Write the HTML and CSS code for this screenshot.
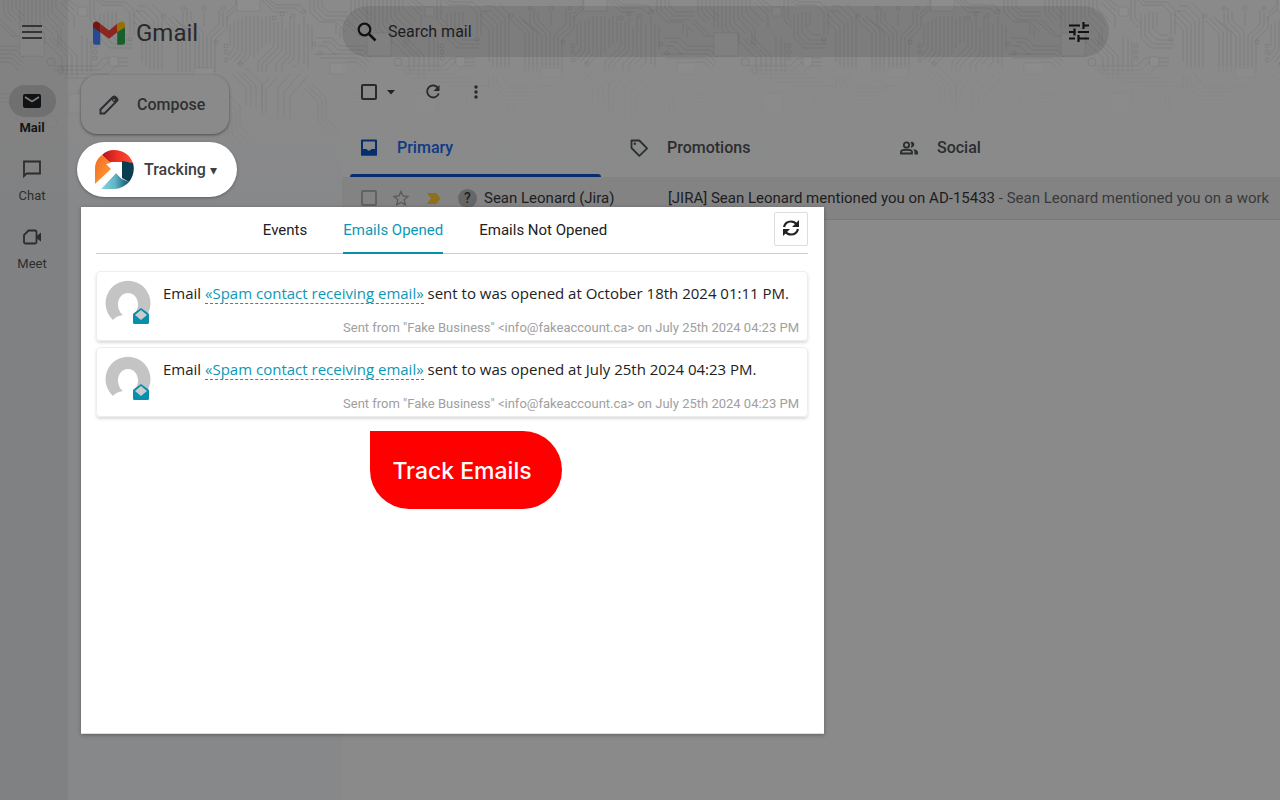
FILE: index.html
```html
<!DOCTYPE html>
<html lang="en">
<head>
<meta charset="utf-8">
<meta name="viewport" content="width=device-width, initial-scale=1">
<title>Gmail</title>
<link rel="stylesheet" href="styles.css">
</head>
<body>
<svg class="circuit" width="100%" height="170" aria-hidden="true">
  <defs>
    <pattern id="board" width="347" height="170" patternUnits="userSpaceOnUse">
      <g fill="none" stroke="#000" stroke-opacity=".075">
        <path d="M97 0l5 5h20l8 8v22M101 0l3 2h22l8 8v25M142 62V30l-9-9M146 66V27l-13-13M150 70V24l-14-14M154 70V21l-10-10h-8M158 70V18l-12-12h-8M162 70V14l-10-10"/>
        <path d="M164 20l14 14v38M168 18l14 14v40M172 16l14 14v42M176 20l14 12v40M183 12v12l12 12v36M187 8v14l12 12v38M191 12v8l12 12v40M207 72V36l12-12V10M211 72V38l12-12V12M215 72V40l12-12V16M204 12v14"/>
        <path d="M240 0v6l-14 12M236 0v5l-10 9M274 22v24l-16 16v10M278 22v26l-16 16v8M282 18v32l-16 16v6M286 28v26l-10 10v8M290 16v40l-8 8v8M294 20v38l-6 6M299 24v38l-6 6M304 16v48"/>
        <path d="M262 0l12 12h14M266 0l9 8h20l7 6M270 0l6 5h24l6 7M310 0v12l10 10h16l11 11M314 0v10l10 10h18l5 5M318 0v8l9 8h20M322 0v6l7 6h18M0 24l12 12h8M0 20l15 14M28 0v30l8 8M32 0v28l8 8M36 0v25l9 9v10M40 0v22l12 12M44 0v18l14 15v12M48 0v16l13 13v16M52 0v12l13 14M56 0v8l14 14"/>
        <path d="M0 46h18l8 8M0 50h16l8 8M0 54h14l8 8M0 58h12l8 8M46 42l16 16v14M49 38l18 18v18M53 38l19 18v20M58 36l19 20v22M82 36v36M87 38v34M91 42v30M316 38h16l8 8h7M322 42h8l8 8h9M318 46h8l8 8h13M314 54h22M319 58h28"/>
        <path d="M54 66h42l8-8h24M54 70h46l8-8h20M58 74h50l8-8h12M64 78h58M82 82h48M100 86h42M232 74l14 14v18M237 72l14 14v20M242 72l14 14v22M246 68l16 16v28M270 78l-8 8v30M276 78l-10 12v24M290 74l-12 14v30M300 74l-16 18v26M308 76l-18 20v24"/>
        <path d="M142 76v12l12 12h28M146 76v10l12 10h26M150 76v8l10 8h28M154 74l10 14h30M182 76l8 10h16M226 92l14 14v20l14 14M222 96l14 14v20l14 14M218 100l14 14v20l14 14M214 104l14 14v20l14 14"/>
        <path d="M0 94h14l12 12M0 98h12l12 12M0 102h10l12 12M78 90v16l16 16v18M82 90v14l16 16v20M86 90v12l16 16v22M90 90v10l16 16v24M120 94v12l-10 12v22M124 94v14l-10 12v20M128 94v16l-10 12v18M162 104v14l16 16h20M166 104v12l15 14h20M304 88l14 14v20l14 14M308 86l14 14v20l14 14M312 84l14 14v20l14 14"/>
        <path d="M100 14v24l10 10h22M104 14v22l9 8h20M108 12v20l8 8h16M112 12v16l7 7h8M116 12v14M230 24v22M234 22v26l-6 8M238 20v30l-8 10M242 18v34l-8 10M246 16v38l-8 10M250 16v40l-8 8M254 16v42M258 16v38M262 18v30M266 16v28M270 16v26M308 24v44M312 26v24M60 2l14 14v12M64 0l11 11M68 0l9 6M90 0v20l8 8M94 0v18l5 5M4 0v14l8 8M8 0v12l8 8M12 0v10l10 10M16 0v8l8 8M20 0v30M24 0v28M336 24v10M340 28v10M0 62h10l9 9"/>
        <circle cx="130" cy="39" r="2"/><circle cx="164" cy="16" r="2"/><circle cx="183" cy="8" r="2"/><circle cx="204" cy="8" r="2"/><circle cx="216" cy="42" r="2"/><circle cx="223" cy="8" r="2"/><circle cx="274" cy="18" r="2"/><circle cx="282" cy="14" r="2"/><circle cx="293" cy="16" r="2"/><circle cx="304" cy="12" r="2"/><circle cx="314" cy="44" r="2"/><circle cx="320" cy="53" r="2"/><circle cx="51" cy="62" r="4"/><circle cx="61" cy="70" r="3"/><circle cx="95" cy="46" r="2"/><circle cx="95" cy="52" r="2"/><circle cx="95" cy="58" r="2"/><circle cx="226" cy="46" r="2"/><circle cx="226" cy="52" r="2"/><circle cx="226" cy="60" r="2"/><circle cx="22" cy="117" r="5"/><circle cx="51" cy="122" r="6"/><circle cx="240" cy="64" r="2"/>
      </g>
      <g fill="#8d8d8d" stroke="#000" stroke-opacity=".06">
        <rect x="78" y="7" width="9" height="9" rx="1"/><rect x="237" y="-2" width="23" height="13"/><rect x="20" y="33" width="24" height="23"/><rect x="109" y="57" width="9" height="9" rx="1"/><rect x="194" y="68" width="20" height="9"/><rect x="330" y="63" width="18" height="11"/><rect x="69" y="94" width="20" height="19"/>
      </g>
    </pattern>
    <linearGradient id="fade" x1="0" y1="0" x2="0" y2="1">
      <stop offset="0" stop-color="#fff"/><stop offset=".4" stop-color="#fff"/><stop offset="1" stop-color="#fff" stop-opacity="0"/>
    </linearGradient>
    <mask id="fade-mask"><rect width="100%" height="170" fill="url(#fade)"/></mask>
  </defs>
  <rect width="100%" height="170" fill="url(#board)" mask="url(#fade-mask)"/>
</svg>

<div class="app">
  <nav class="rail" aria-label="Apps">
    <button class="menu" aria-label="Main menu"><svg width="20" height="14" viewBox="0 0 20 14"><path d="M0 1h20M0 7h20M0 13h20" stroke="#333438" stroke-width="2"/></svg></button>
    <a class="rail-item active" href="#mail"><span class="rail-icon"><svg width="18" height="14" viewBox="0 0 18 14"><rect width="18" height="14" rx="2" fill="#111214"/><path d="M2 3l7 4.500 7-4.500" fill="none" stroke="#7e7f80" stroke-width="1.800"/></svg></span>Mail</a>
    <a class="rail-item" href="#chat"><span class="rail-icon"><svg width="18" height="18" viewBox="0 0 18 18"><path d="M1 16V1.500h16v12H3.500z" fill="none" stroke="#2c2d2f" stroke-width="1.800"/></svg></span>Chat</a>
    <a class="rail-item" href="#meet"><span class="rail-icon"><svg width="18" height="16" viewBox="0 0 18 16"><path d="M5.500 1.500H12a1.500 1.500 0 0 1 1.500 1.500v10a1.500 1.500 0 0 1-1.500 1.500H2.500A1.500 1.500 0 0 1 1 13V6z" fill="none" stroke="#2c2d2f" stroke-width="1.800"/><path d="M13 7.500L18 3.500v9L13 9z" fill="#2c2d2f"/></svg></span>Meet</a>
  </nav>

  <aside class="side">
    <a class="brand" href="#inbox">
      <svg width="32" height="24" viewBox="0 0 33 24" aria-hidden="true"><path d="M0 4l7.500 5v15H2.200A2.200 2.200 0 0 1 0 21.800z" fill="#254992"/><path d="M25 9l8-5v17.800a2.200 2.200 0 0 1-2.200 2.200H25z" fill="#195f2e"/><path d="M7.500 2.500l9 6.800 8.500-6.800v8.800l-8.500 6.700-9-6.700z" fill="#8c251d"/><path d="M0 6V3.400C0 .5 3.200-.9 5.500.8l2 1.700v8.800z" fill="#701511"/><path d="M25 2.500L27.500.8C29.800-.9 33 .5 33 3.400V6l-8 5.300z" fill="#967000"/></svg>
      <span>Gmail</span>
    </a>
    <button class="compose"><svg width="20" height="20" viewBox="0 0 20 20" aria-hidden="true"><path d="M1.500 18.500v-4L14 2q1.200-1 2.400 0l1.500 1.500q1.200 1.200 0 2.400L5.500 18.500z" fill="none" stroke="#2c2e31" stroke-width="2"/><path d="M11.500 4l2.300-2.300q1.500-1.200 3 0l1.500 1.500q1.200 1.500 0 3L16 8.500z" fill="#2c2e31"/><path d="M14.500 4.500l1 1" stroke="#8a8a8a" stroke-width="1.500"/></svg>Compose</button>
    <div class="tracker">
      <button class="tracking" aria-expanded="true">
        <svg width="39" height="39" viewBox="0 0 39 39" aria-hidden="true">
          <defs><linearGradient id="orange" x1="0" y1="0" x2="1" y2="1"><stop stop-color="#f26a21"/><stop offset="1" stop-color="#ffa23c"/></linearGradient><linearGradient id="red"><stop stop-color="#b3161e"/><stop offset=".5" stop-color="#ee3124"/><stop offset="1" stop-color="#fb4e36"/></linearGradient><linearGradient id="blue"><stop stop-color="#8ad3e3"/><stop offset=".5" stop-color="#62b4c7"/><stop offset="1" stop-color="#0b5367"/></linearGradient></defs>
          <path d="M7 5Q12 0 19 0c9 0 16 5 19 13l-11-1H14z" fill="url(#red)"/>
          <path d="M7 5C3 8 0 12 0 19v15l17-15-5-5 4-1z" fill="url(#orange)"/>
          <path d="M27 11l11 2c2 7 0 14-4 19l-7-4z" fill="#083e50"/>
          <path d="M6 39l15-16 6 6 7 3c-4 4-9 7-15 7z" fill="url(#blue)"/>
          <path d="M11 14l16-2v17l-6-6-15 16-6-5 16-15z" fill="#fff"/>
        </svg>
        Tracking<span class="caret" aria-hidden="true">▾</span>
      </button>
      <section class="panel" aria-label="Tracking">
        <header class="panel-head">
          <div class="panel-tabs" role="tablist">
            <button class="panel-tab" role="tab">Events</button>
            <button class="panel-tab selected" role="tab" aria-selected="true">Emails Opened</button>
            <button class="panel-tab" role="tab">Emails Not Opened</button>
          </div>
          <button class="reload" aria-label="Reload"><svg width="18" height="16" viewBox="0 0 18 16"><path d="M2 7C3 3 5.500 1.500 9 1.500q3.500 0 6 3M16 9c-1 4-3.500 5.500-7 5.500q-3.500 0-6-3" fill="none" stroke="#222" stroke-width="2.200"/><path d="M17 0v7h-7zM1 16V9h7z" fill="#222"/></svg></button>
        </header>
        <ul class="events">
          <li class="event">
            <span class="avatar"><svg width="46" height="46" viewBox="0 0 46 46" aria-hidden="true"><path d="M8 40A22.500 22.500 0 1 1 38 40q-2-4-10-5c9-7 5-22-5-22s-14 15-5 22q-7 1-10 5z" fill="#c4c4c4"/></svg><svg class="opened" width="16" height="16" viewBox="0 0 16 16" aria-hidden="true"><path d="M1 5l7-5 7 5q1 .5 1 2v7.500q0 1.500-1.500 1.500h-13Q0 16 0 14.500V7q0-1.500 1-2z" fill="#078fac"/><path d="M2 7l6-5 6 5-6 5z" fill="#ccc"/></svg></span>
            <div class="event-body"><p>Email <a href="#contact">«Spam contact receiving email»</a> sent to was opened at October 18th 2024 01:11 PM.</p><p class="source">Sent from "Fake Business" &lt;info@fakeaccount.ca&gt; on July 25th 2024 04:23 PM</p></div>
          </li>
          <li class="event">
            <span class="avatar"><svg width="46" height="46" viewBox="0 0 46 46" aria-hidden="true"><path d="M8 40A22.500 22.500 0 1 1 38 40q-2-4-10-5c9-7 5-22-5-22s-14 15-5 22q-7 1-10 5z" fill="#c4c4c4"/></svg><svg class="opened" width="16" height="16" viewBox="0 0 16 16" aria-hidden="true"><path d="M1 5l7-5 7 5q1 .5 1 2v7.500q0 1.500-1.500 1.500h-13Q0 16 0 14.500V7q0-1.500 1-2z" fill="#078fac"/><path d="M2 7l6-5 6 5-6 5z" fill="#ccc"/></svg></span>
            <div class="event-body"><p>Email <a href="#contact">«Spam contact receiving email»</a> sent to was opened at July 25th 2024 04:23 PM.</p><p class="source">Sent from "Fake Business" &lt;info@fakeaccount.ca&gt; on July 25th 2024 04:23 PM</p></div>
          </li>
        </ul>
        <button class="track">Track Emails</button>
      </section>
    </div>
  </aside>

  <main class="main">
    <form class="search" role="search">
      <svg width="20" height="20" viewBox="0 0 20 20" aria-hidden="true"><circle cx="7.500" cy="7.500" r="5.800" fill="none" stroke="#111" stroke-width="2.200"/><path d="M12 12l6.500 6.500" stroke="#111" stroke-width="2.600"/></svg>
      <input type="search" placeholder="Search mail" aria-label="Search mail">
      <button type="button" aria-label="Show search options"><svg width="20" height="20" viewBox="0 0 20 20"><path d="M0 3.500h11M14.500 3.500H20M14.500 0v7M0 10h6M5.500 6.500v7M9 10h11M0 16.500h6M9.500 13v7M9 16.500h11" stroke="#111" stroke-width="2.200"/></svg></button>
    </form>
    <section class="mailbox">
      <div class="toolbar">
        <input type="checkbox" class="tick dark" aria-label="Select all">
        <button class="drop" aria-label="Select options"><svg width="8" height="5" viewBox="0 0 8 5"><path d="M0 0h8L4 4.500z" fill="#222"/></svg></button>
        <button class="refresh" aria-label="Refresh"><svg width="16" height="16" viewBox="0 0 16 16"><path d="M13.200 4.200A6 6 0 1 0 13.800 9.500" fill="none" stroke="#28292b" stroke-width="1.800"/><path d="M14.500 1v6h-6z" fill="#28292b"/></svg></button>
        <button class="more" aria-label="More"><svg width="4" height="14" viewBox="0 0 4 14" fill="#28292b"><circle cx="2" cy="2" r="1.700"/><circle cx="2" cy="7" r="1.700"/><circle cx="2" cy="12" r="1.700"/></svg></button>
      </div>
      <div class="tabs" role="tablist">
        <button class="tab current" role="tab" aria-selected="true"><svg width="18" height="18" viewBox="0 0 18 18"><path d="M2 1.500h14v14H2z" fill="none" stroke="#062e6f" stroke-width="2" stroke-linejoin="round"/><path d="M1 10h5.500q2.500 3.500 5 0H17v6.500H1z" fill="#062e6f"/></svg>Primary</button>
        <button class="tab" role="tab"><svg width="18" height="18" viewBox="0 0 18 18"><path d="M1.500 1.500h7.800l7.800 7.800-7.800 7.500-7.800-7.800z" fill="none" stroke="#2c2d2f" stroke-width="1.800" stroke-linejoin="round"/><circle cx="4.800" cy="4.800" r="1.200" fill="#2c2d2f"/></svg>Promotions</button>
        <button class="tab" role="tab"><svg width="18" height="14" viewBox="0 0 18 14"><circle cx="6.500" cy="4" r="2.700" fill="none" stroke="#2c2d2f" stroke-width="1.800"/><path d="M1 12.500V11c0-3 11-3 11 0v1.500z" fill="none" stroke="#2c2d2f" stroke-width="1.800"/><path d="M10.500 1q3-1 3.700 1.700.5 3.500-3.700 4Q12.500 4 10.500 1zM13 8q5 .8 5 3.500v2h-3.500V11q0-2-1.500-3z" fill="#2c2d2f"/></svg>Social</button>
      </div>
      <article class="mail">
        <input type="checkbox" class="tick" aria-label="Select message">
        <button class="star" aria-label="Star"><svg width="16" height="16" viewBox="0 0 16 16"><path d="M8 1.500l2 4.500 5 .5-3.800 3.300 1.200 5L8 12.200l-4.400 2.600 1.200-5L1 6.500 6 6z" fill="none" stroke="#5a5a5a" stroke-width="1.300"/></svg></button>
        <svg width="14" height="11" viewBox="0 0 14 11" aria-label="Important"><path d="M0 0h8.500q1 0 1.500 1l3.500 4.500L10 10q-.5 1-1.500 1H0l4-5.500z" fill="#8e6f1c"/></svg>
        <span class="unknown">?</span>
        <span class="sender">Sean Leonard (Jira)</span>
        <span class="subject">[JIRA] Sean Leonard mentioned you on AD-15433<span class="snippet"> - Sean Leonard mentioned you on a work</span></span>
      </article>
    </section>
  </main>
</div>
</body>
</html>
```
FILE: styles.css
```css
* { box-sizing: border-box; }
body {
  margin: 0;
  min-height: 100vh;
  overflow: hidden;
  background: linear-gradient(#8a8a8a 100px, #87888a 210px);
  color: #1c1d1f;
  font: 16px/20px Roboto, "Liberation Sans", sans-serif;
}
button, input { font: inherit; color: inherit; }
button { padding: 0; border: 0; background: none; }
a { color: inherit; text-decoration: none; }
svg { display: block; flex: none; }
p, ul { margin: 0; padding: 0; }
.circuit { position: absolute; top: 0; left: 0; }

.app { position: relative; display: grid; grid-template-columns: 68px 274px minmax(0, 1fr); min-height: 100vh; }

.rail { display: flex; flex-direction: column; align-items: center; padding: 22px 4px 0 0; background: rgba(0, 0, 0, .05); }
.menu { padding: 3px 0; margin-bottom: 43px; }
.rail-item { display: flex; flex-direction: column; align-items: center; height: 68px; font-size: 13px; line-height: 16px; color: #2c2d2f; gap: 3px; }
.rail-icon { display: grid; place-items: center; width: 47px; height: 32px; border-radius: 16px; }
.active { color: #141516; font-weight: 700; }
.active .rail-icon { background: #707071; }

.side { padding: 19px 0 0 9px; }
.brand { display: flex; align-items: center; gap: 11px; height: 28px; margin: 0 0 28px 16px; font-size: 24px; line-height: 28px; color: #28292b; }
.compose { display: flex; align-items: center; gap: 18px; width: 148px; height: 59px; margin-left: 4px; padding-left: 18px; border-radius: 16px; background: #8a8a8a; color: #2f3032; font-weight: 500; box-shadow: 0 1px 3px rgba(0, 0, 0, .45); }
.tracker { position: relative; margin-top: 8px; }
.tracking { display: flex; align-items: center; width: 160px; height: 55px; padding-left: 18px; gap: 10px; border-radius: 28px; background: #fff; color: #3c4043; font-weight: 500; box-shadow: 0 1px 3px rgba(0, 0, 0, .3); }
.caret { margin-left: -6px; font-size: 14px; }

.panel { position: absolute; z-index: 1; top: 65px; left: 4px; width: 743px; min-height: 527px; padding: 0 16px 16px 15px; background: #fff; border-bottom: 1px solid #ddd; box-shadow: 0 1px 4px rgba(0, 0, 0, .3); }
.panel-head { position: relative; display: flex; justify-content: center; height: 47px; border-bottom: 1px solid #ccc; }
.panel-tabs { display: flex; gap: 36px; padding-right: 34px; font-size: 15px; }
.panel-tab { height: 47px; border-bottom: 2px solid transparent; color: #222; }
.panel-tab.selected { color: #0b98b5; border-color: #078fac; }
.reload { position: absolute; top: 5px; right: 0; display: grid; place-items: center; width: 34px; height: 34px; padding-bottom: 3px; border: 1px solid #ddd; border-radius: 2px; }
.events { display: grid; gap: 6px; margin-top: 17px; list-style: none; }
.event { display: flex; gap: 12px; height: 70px; padding: 8px; border: 1px solid #eee; border-radius: 4px; box-shadow: 0 2px 3px rgba(0, 0, 0, .14); color: #222; font: 15px/20px "Open Sans", sans-serif; }
.avatar { position: relative; width: 46px; height: 46px; }
.opened { position: absolute; right: 2px; bottom: 2px; }
.event-body { display: flex; flex: 1; flex-direction: column; gap: 17px; padding-top: 3px; white-space: nowrap; }
.event-body a { color: #0b98b5; border-bottom: 1px dashed #0b98b5; }
.source { font: 13px/16px Roboto, sans-serif; color: #a0a0a0; text-align: right; }
.track { display: block; width: 192px; height: 78px; margin: 14px auto 0 274px; padding: 2px 8px 0 0; border-radius: 0 39px 39px 39px; background: #f00; color: #fff; font: 500 23px/28px Inter, sans-serif; }

.main { display: flex; flex-direction: column; }
.search { display: flex; align-items: center; width: calc(100% - 171px); height: 51px; margin: 6px 0 9px; padding: 0 20px 0 15px; border-radius: 26px; background: rgba(0, 0, 0, .09); }
.search input { flex: 1; min-width: 0; margin-left: 11px; padding: 0; border: 0; outline: 0; background: none; }
.search input::placeholder { color: #1c1d1f; opacity: 1; }
.mailbox { flex: 1; background: linear-gradient(rgba(138, 138, 138, .5), #8a8a8a 110px); }
.toolbar { display: flex; align-items: center; height: 52px; padding-left: 19px; }
.tick { appearance: none; flex: none; width: 16px; height: 16px; margin: 0; border: 2px solid #616161; border-radius: 2px; }
.tick.dark { border-color: #28292b; }
.drop { margin-left: 10px; }
.refresh { margin-left: 30px; }
.more { margin-left: 33px; }
.tabs { display: flex; height: 59px; padding-left: 8px; }
.tab { display: flex; align-items: center; width: 270px; padding-left: 10px; gap: 19px; color: #2c2d2f; font-weight: 500; }
.tab.current { position: relative; color: #0d3a86; }
.tab.current::after { content: ""; position: absolute; bottom: 0; left: 0; width: 251px; height: 3px; border-radius: 3px 3px 0 0; background: #062e6f; }
.mail { display: flex; align-items: center; height: 43px; padding-left: 19px; overflow: hidden; white-space: nowrap; font-size: 15px; background: #838384; border-bottom: 1px solid #7a7a7a; }
.star { margin: 0 18px 0 16px; }
.unknown { flex: none; width: 19px; height: 19px; margin: 0 7px 0 17px; border-radius: 50%; background: #666; font-size: 14px; line-height: 19px; text-align: center; font-weight: 500; }
.sender { flex: none; width: 184px; }
.snippet { color: #38393b; }
```
